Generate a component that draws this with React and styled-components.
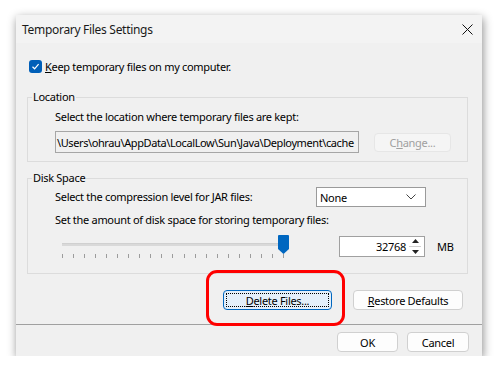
import React from "react";
import styled, { createGlobalStyle } from "styled-components";

const GlobalStyle = createGlobalStyle`
  html, body {
    margin: 0;
    padding: 0;
    background: #ffffff;
  }
  body {
    font-family: "Noto Sans", "Open Sans", sans-serif;
    font-size: 11px;
    letter-spacing: -0.3px;
    color: #000000;
  }
`;

function Check() {
  return (
    <CheckBox>
      <svg width="9" height="9" viewBox="0 0 9 9">
        <path d="M1.5 4.8 L3.6 6.8 L7.6 2.2" fill="none" stroke="#fff" strokeWidth="1.2" />
      </svg>
    </CheckBox>
  );
}

function Slider() {
  const ticks = Array.from({ length: 21 });
  return (
    <SliderWrap>
      <Track />
      <Ticks>
        {ticks.map((_, i) => (
          <Tick key={i} />
        ))}
      </Ticks>
      <Thumb width="11" height="19" viewBox="0 0 11 19">
        <path d="M0 1 Q0 0 1 0 H10 Q11 0 11 1 V14 L5.5 19 L0 14 Z" fill="#0067c0" />
      </Thumb>
    </SliderWrap>
  );
}

function App() {
  return (
    <>
      <GlobalStyle />
      <Window>
        <TitleBar>
          <Title>Temporary Files Settings</Title>
          <svg width="11" height="11" viewBox="0 0 11 11">
            <path d="M0.5 0.5 L10.5 10.5 M10.5 0.5 L0.5 10.5" stroke="#111" strokeWidth="1" />
          </svg>
        </TitleBar>
        <Body>
          <CheckRow>
            <Check />
            <span>
              <u>K</u>eep temporary files on my computer.
            </span>
          </CheckRow>

          <Group>
            <Legend>Location</Legend>
            <Label $top={4}>Select the location where temporary files are kept:</Label>
            <PathRow>
              <PathBox>\Users\ohrau\AppData\LocalLow\Sun\Java\Deployment\cache</PathBox>
              <Button $w={77} $h={19} disabled>
                C<u>h</u>ange...
              </Button>
            </PathRow>
          </Group>

          <Group $top={8} $bottom={14}>
            <Legend>Disk Space</Legend>
            <SelectRow>
              <RowLabel>Select the compression level for JAR files:</RowLabel>
              <Select>
                None
                <svg width="10" height="6" viewBox="0 0 10 6">
                  <path d="M0.5 0.5 L5 5 L9.5 0.5" fill="none" stroke="#444" strokeWidth="1" />
                </svg>
              </Select>
            </SelectRow>
            <Label $top={5}>Set the amount of disk space for storing temporary files:</Label>
            <SliderRow>
              <Slider />
              <Spinner>
                <SpinValue>32768</SpinValue>
                <SpinArrows>
                  <svg width="7" height="4" viewBox="0 0 7 4">
                    <path d="M0 4 L3.5 0 L7 4 Z" fill="#222" />
                  </svg>
                  <SpinDivider />
                  <svg width="7" height="4" viewBox="0 0 7 4">
                    <path d="M0 0 L3.5 4 L7 0 Z" fill="#222" />
                  </svg>
                </SpinArrows>
              </Spinner>
              <Unit>MB</Unit>
            </SliderRow>
          </Group>

          <ActionRow>
            <Highlight>
              <Button $w={109} $h={20} $focused>
                <FocusRing>
                  <u>D</u>elete Files...
                </FocusRing>
              </Button>
              <RedMark />
            </Highlight>
            <Button $w={110} $h={20}>
              <u>R</u>estore Defaults
            </Button>
          </ActionRow>
        </Body>
        <Footer>
          <Button $w={61} $h={20}>OK</Button>
          <Button $w={62} $h={20}>Cancel</Button>
        </Footer>
      </Window>
    </>
  );
}

const Window = styled.div`
  margin: 15px 0 0 16px;
  width: 466px;
  height: 341px;
  background: #f0f0f0;
  box-shadow: 1px 3px 9px rgba(0, 0, 0, 0.45);
  display: flex;
  flex-direction: column;
`;

const TitleBar = styled.div`
  height: 28px;
  padding: 0 9px 0 6px;
  background: #f3f3f3;
  display: flex;
  align-items: center;
  justify-content: space-between;
`;

const Title = styled.div`
  font-size: 12px;
  color: #1a1a1a;
`;

const Body = styled.div`
  flex: 1;
  padding: 0 14px 0 11px;
  display: flex;
  flex-direction: column;
`;

const CheckRow = styled.div`
  margin: 15px 0 0 2px;
  height: 16px;
  display: flex;
  align-items: center;
  gap: 3px;
`;

const CheckBox = styled.div`
  width: 13px;
  height: 13px;
  border-radius: 3px;
  background: #005fb8;
  display: flex;
  align-items: center;
  justify-content: center;
`;

const Group = styled.fieldset`
  margin: ${(p) => p.$top ?? 15}px 0 0 0;
  padding: 0 0 ${(p) => p.$bottom ?? 8}px 27px;
  border: 1px solid #dcdcdc;
  min-width: 0;
`;

const Legend = styled.legend`
  margin-left: -23px;
  padding: 0 1px;
  font-size: 11px;
  line-height: 16px;
`;

const Label = styled.div`
  margin-top: ${(p) => p.$top}px;
  line-height: 16px;
`;

const PathRow = styled.div`
  margin-top: 6px;
  display: flex;
  align-items: center;
  gap: 15px;
`;

const PathBox = styled.div`
  width: 304px;
  height: 22px;
  box-sizing: border-box;
  border: 1px solid #a6a6a6;
  background: #f0f0f0;
  display: flex;
  align-items: center;
  overflow: hidden;
  white-space: nowrap;
  padding-left: 1px;
  letter-spacing: -0.4px;
`;

const Button = styled.button`
  width: ${(p) => p.$w}px;
  height: ${(p) => p.$h}px;
  box-sizing: border-box;
  padding: 0;
  font-family: inherit;
  font-size: 11px;
  letter-spacing: inherit;
  color: #000;
  background: ${(p) => (p.$focused ? "#e3effa" : "#fdfdfd")};
  border: 1px solid ${(p) => (p.$focused ? "#0067c0" : "#d0d0d0")};
  border-radius: 4px;
  display: flex;
  align-items: center;
  justify-content: center;

  &:disabled {
    color: #a0a0a0;
    background: #f5f5f5;
    border-color: #e6e6e6;
  }
`;

const FocusRing = styled.span`
  width: calc(100% - 4px);
  height: calc(100% - 4px);
  box-sizing: border-box;
  border: 1px dotted #000;
  display: flex;
  align-items: center;
  justify-content: center;
`;

const SelectRow = styled.div`
  margin-top: 1px;
  display: flex;
  align-items: center;
`;

const RowLabel = styled.div`
  width: 261px;
  line-height: 16px;
`;

const Select = styled.div`
  width: 110px;
  height: 20px;
  box-sizing: border-box;
  border: 1px solid #9a9a9a;
  background: #fff;
  padding: 0 9px 0 3px;
  display: flex;
  align-items: center;
  justify-content: space-between;
`;

const SliderRow = styled.div`
  margin-top: 6px;
  height: 25px;
  display: flex;
  align-items: center;
`;

const SliderWrap = styled.div`
  position: relative;
  width: 284px;
  height: 25px;
`;

const Track = styled.div`
  margin: 9px 0 0 7px;
  width: 227px;
  height: 3px;
  background: #d9d9d9;
  border-top: 1px solid #d0d0d0;
  box-sizing: border-box;
`;

const Ticks = styled.div`
  margin: 8px 0 0 7px;
  width: 222px;
  display: flex;
  justify-content: space-between;
`;

const Tick = styled.div`
  width: 1px;
  height: 4px;
  background: #9c9c9c;
`;

const Thumb = styled.svg`
  position: absolute;
  left: 223px;
  top: 1px;
`;

const Spinner = styled.div`
  width: 86px;
  height: 21px;
  box-sizing: border-box;
  border: 1px solid #a0a0a0;
  background: #fff;
  display: flex;
  align-items: center;
`;

const SpinValue = styled.div`
  flex: 1;
  text-align: right;
  padding-right: 2px;
`;

const SpinArrows = styled.div`
  width: 14px;
  height: 17px;
  margin-right: 2px;
  display: flex;
  flex-direction: column;
  align-items: center;
  justify-content: space-around;
`;

const SpinDivider = styled.div`
  width: 12px;
  height: 1px;
  background: #cfcfcf;
`;

const Unit = styled.div`
  margin-left: 12px;
`;

const ActionRow = styled.div`
  margin: 16px 5px 0 0;
  display: flex;
  justify-content: flex-end;
  gap: 21px;
`;

const Highlight = styled.div`
  position: relative;
`;

const RedMark = styled.div`
  position: absolute;
  left: -17px;
  right: -13px;
  top: -20px;
  bottom: -16px;
  border: 3px solid #ff0000;
  border-radius: 11px;
  pointer-events: none;
`;

const Footer = styled.div`
  height: 32px;
  box-sizing: border-box;
  border-top: 1px solid #a0a0a0;
  padding: 7px 13px 0 0;
  display: flex;
  justify-content: flex-end;
  gap: 9px;
`;

export default App;
